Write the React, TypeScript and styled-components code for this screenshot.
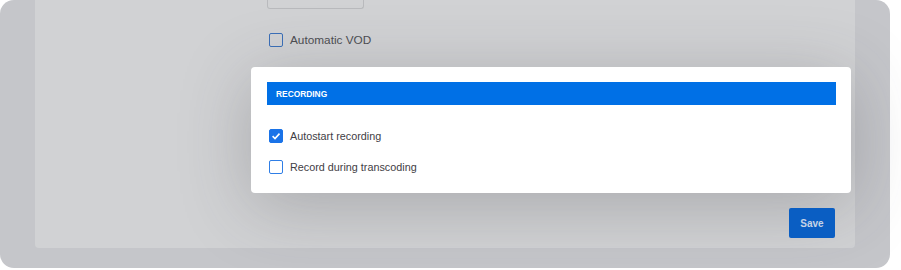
import React from "react";
import styled, { createGlobalStyle } from "styled-components";

const GlobalStyle = createGlobalStyle`
  body {
    margin: 0;
    background: #ffffff;
    font-family: "Liberation Sans", Arial, Helvetica, sans-serif;
  }
`;

const Frame = styled.div`
  width: 890px;
  height: 268px;
  box-sizing: border-box;
  padding: 0 35px 20px 35px;
  background: #c5c6ca;
  border-radius: 14px;
`;

const Panel = styled.div`
  height: 248px;
  box-sizing: border-box;
  padding-left: 216px;
  background: #d1d2d4;
  border-radius: 0 0 4px 4px;
`;

const Column = styled.div`
  width: 600px;
  display: flex;
  flex-direction: column;
`;

const InputStub = styled.div`
  margin-left: 16px;
  width: 97px;
  height: 9px;
  box-sizing: border-box;
  border: 1px solid #b9babd;
  border-top: none;
  border-radius: 0 0 3px 3px;
`;

const Option = styled.label<{ $dim?: boolean }>`
  display: flex;
  align-items: center;
  gap: 7px;
  height: 14px;
  font-size: ${(p) => (p.$dim ? "11.8px" : "10.8px")};
  color: ${(p) => (p.$dim ? "#4d4e52" : "#3f4045")};
`;

const DimOption = styled(Option)`
  margin: 24px 0 20px 18px;
`;

const Card = styled.div`
  background: #ffffff;
  border-radius: 4px;
  padding: 15px 15px 0 16px;
  height: 126px;
  box-sizing: border-box;
  box-shadow: 0 12px 70px rgba(60, 62, 70, 0.28);
`;

const SectionHeader = styled.div`
  height: 23px;
  display: flex;
  align-items: center;
  padding-left: 9px;
  background: #0070e6;
  color: #ffffff;
  font-size: 8.4px;
  font-weight: 700;
`;

const OptionList = styled.div`
  display: flex;
  flex-direction: column;
  gap: 17px;
  padding: 24px 0 0 2px;
`;

const Box = styled.span<{ $checked?: boolean; $dim?: boolean }>`
  width: 14px;
  height: 14px;
  box-sizing: border-box;
  border-radius: 2px;
  display: flex;
  align-items: center;
  justify-content: center;
  border: 1.5px solid
    ${(p) => (p.$checked ? "#1a73e8" : p.$dim ? "#3b6fb8" : "#2f7ee6")};
  background: ${(p) => (p.$checked ? "#1a73e8" : "transparent")};
`;

const Footer = styled.div`
  display: flex;
  justify-content: flex-end;
  padding: 15px 16px 0 0;
`;

const SaveButton = styled.button`
  width: 46px;
  height: 30px;
  border: none;
  border-radius: 2px;
  background: #0a5ec3;
  color: #c6d3e6;
  font-family: "Liberation Sans", Arial, Helvetica, sans-serif;
  font-size: 10px;
  font-weight: 700;
  padding: 0;
`;

const Check = ({ checked, dim }: { checked?: boolean; dim?: boolean }) => (
  <Box $checked={checked} $dim={dim}>
    {checked && (
      <svg width="10" height="10" viewBox="0 0 10 10">
        <path
          d="M1.6 5.2 L4 7.5 L8.5 2.6"
          fill="none"
          stroke="#ffffff"
          strokeWidth="1.6"
        />
      </svg>
    )}
  </Box>
);

export default function App() {
  return (
    <>
      <GlobalStyle />
      <Frame>
        <Panel>
          <Column>
            <InputStub />
            <DimOption $dim>
              <Check dim />
              Automatic VOD
            </DimOption>
            <Card>
              <SectionHeader>RECORDING</SectionHeader>
              <OptionList>
                <Option>
                  <Check checked />
                  Autostart recording
                </Option>
                <Option>
                  <Check />
                  Record during transcoding
                </Option>
              </OptionList>
            </Card>
            <Footer>
              <SaveButton>Save</SaveButton>
            </Footer>
          </Column>
        </Panel>
      </Frame>
    </>
  );
}
